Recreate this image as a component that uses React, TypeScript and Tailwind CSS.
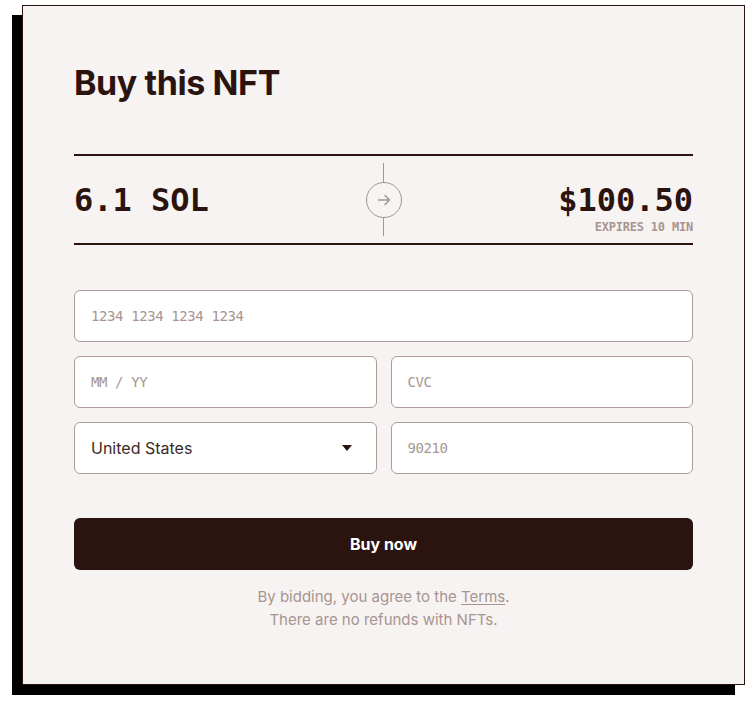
const mono = "font-['DejaVu_Sans_Mono','Liberation_Mono',monospace]";
const sans = "font-['Inter','Liberation_Sans',sans-serif]";

const field =
  "h-[52px] w-full rounded-[6px] border border-[#ad9c97] bg-white px-4 text-[14px] tracking-[-0.4px] text-[#2b1410] outline-none placeholder:text-[#a8958f] " +
  mono;

export default function App() {
  return (
    <div className="min-h-screen bg-white pl-[22px] pt-[5px]">
      <div
        className={`h-[680px] w-[723px] border border-[#2b1410] bg-[#f6f3f2] px-[51px] pt-[57px] shadow-[-10px_10px_0_0_#000] ${sans}`}
      >
        <h1 className="text-[34px] leading-[40px] font-bold tracking-[-0.4px] text-[#2b1410]">Buy this NFT</h1>

        <div className="mt-[51px] grid h-[91px] grid-cols-[1fr_auto_1fr] border-y-2 border-[#2b1410]">
          <div className={`pt-[28px] text-[32px] leading-[32px] font-bold text-[#2b1410] ${mono}`}>6.1 SOL</div>
          <div className="flex flex-col items-center py-[7px]">
            <div className="w-px flex-1 bg-[#a8958f]" />
            <div className="flex h-[36px] w-[36px] items-center justify-center rounded-full border border-[#a8958f]">
              <svg width="16" height="16" viewBox="0 0 16 16" fill="none" stroke="#a8958f" strokeWidth="1.5" strokeLinecap="round" strokeLinejoin="round">
                <path d="M2.5 8h11M9 3.5 13.5 8 9 12.5" />
              </svg>
            </div>
            <div className="w-px flex-1 bg-[#a8958f]" />
          </div>
          <div className={`flex flex-col items-end pt-[28px] ${mono}`}>
            <div className="text-[32px] leading-[32px] font-bold text-[#2b1410]">$100.50</div>
            <div className="mt-[5px] text-[12px] leading-[12px] font-bold tracking-[-0.2px] text-[#a8958f]">EXPIRES 10 MIN</div>
          </div>
        </div>

        <div className="mt-[45px] flex flex-col gap-[14px]">
          <input className={field} placeholder="1234 1234 1234 1234" />
          <div className="grid grid-cols-2 gap-[14px]">
            <input className={field} placeholder="MM / YY" />
            <input className={field} placeholder="CVC" />
          </div>
          <div className="grid grid-cols-2 gap-[14px]">
            <div className="relative">
              <select
                className={`h-[52px] w-full appearance-none rounded-[6px] border border-[#ad9c97] bg-white px-4 text-[16px] text-[#3b2a27] outline-none ${sans}`}
                defaultValue="US"
              >
                <option value="US">United States</option>
              </select>
              <svg className="pointer-events-none absolute right-[25px] top-[23px]" width="10" height="6" viewBox="0 0 10 6">
                <path d="M0 0h10L5 6z" fill="#2b1410" />
              </svg>
            </div>
            <input className={field} placeholder="90210" />
          </div>
        </div>

        <button className="mt-[44px] h-[52px] w-full rounded-[6px] bg-[#2b1410] text-[16px] font-bold text-white">Buy now</button>

        <div className="mt-[15px] text-center text-[15px] leading-[23px] text-[#a8958f]">
          <p>
            By bidding, you agree to the <span className="underline underline-offset-2">Terms</span>.
          </p>
          <p>There are no refunds with NFTs.</p>
        </div>
      </div>
    </div>
  );
}
